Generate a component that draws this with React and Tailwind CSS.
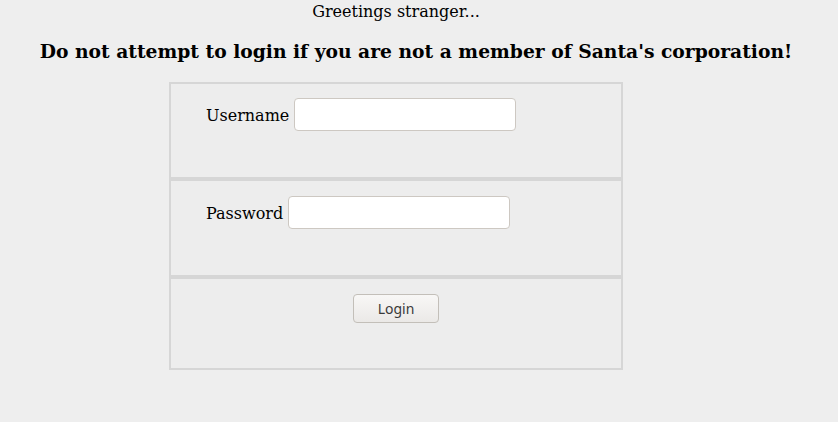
export default function App() {
  return (
    <div className="w-[838px] h-[422px] bg-[#eeeeee] text-black font-['DejaVu_Serif',serif] overflow-hidden">
      <div className="ml-[169px] w-[454px] pt-[2px] text-center text-[16px] leading-[19px]">
        Greetings stranger...
      </div>
      <h3 className="mt-[19px] pr-[6px] text-center font-bold text-[18.72px] leading-[22px]">
        Do not attempt to login if you are not a member of Santa's corporation!
      </h3>
      <div className="mt-[20px] ml-[169px] w-[454px] border-2 border-[#d6d6d6] bg-[#ededed]">
        <div className="h-[93px] pt-[14px] pl-[35px]">
          <div className="flex items-start gap-[5px]">
            <label className="mt-[7px] text-[16px] leading-[21px]">Username</label>
            <input type="text" className="w-[222px] h-[33px] bg-white border border-[#cdc8c2] rounded-[4px] outline-none" />
          </div>
        </div>
        <div className="h-[4px] bg-[#d6d6d6]" />
        <div className="h-[94px] pt-[15px] pl-[35px]">
          <div className="flex items-start gap-[5px]">
            <label className="mt-[7px] text-[16px] leading-[21px]">Password</label>
            <input type="password" className="w-[222px] h-[33px] bg-white border border-[#cdc8c2] rounded-[4px] outline-none" />
          </div>
        </div>
        <div className="h-[4px] bg-[#d6d6d6]" />
        <div className="h-[89px] pt-[15px] flex justify-center items-start">
          <button className="w-[86px] h-[29px] rounded-[4px] border border-[#c3bfb9] bg-gradient-to-b from-[#f8f7f6] to-[#ebe9e7] text-[#3a3a3a] text-[14px] font-['Noto_Sans',sans-serif] leading-none">
            Login
          </button>
        </div>
      </div>
    </div>
  );
}
